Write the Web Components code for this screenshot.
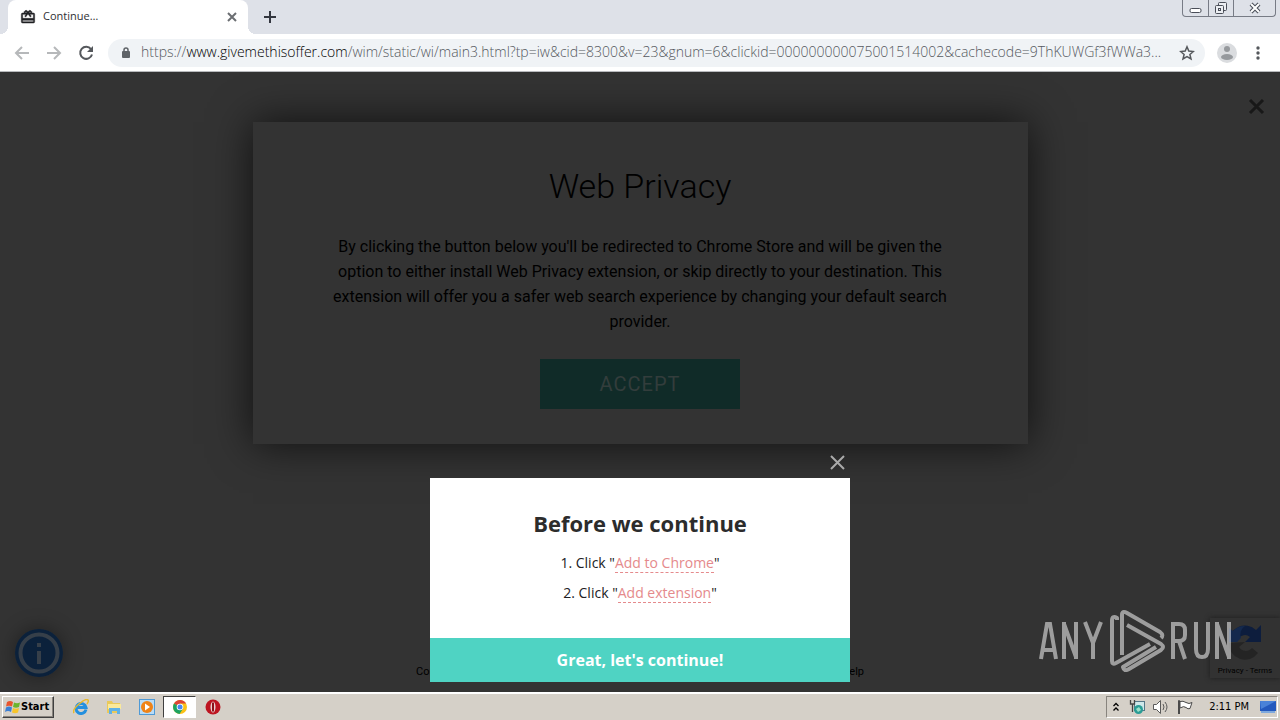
<!DOCTYPE html>
<html lang="en">
<head>
<meta charset="utf-8">
<title>Continue…</title>
<style>
html, body { height: 100%; margin: 0; }
body { display: flex; flex-direction: column; overflow: hidden; font-family: "Open Sans", sans-serif; background: #333; }
</style>
</head>
<body>
<tab-strip></tab-strip>
<address-bar></address-bar>
<offer-page>
  <offer-card heading="Web Privacy" action="ACCEPT">By clicking the button below you'll be redirected to Chrome Store and will be given the option to either install Web Privacy extension, or skip directly to your destination. This extension will offer you a safer web search experience by changing your default search provider.</offer-card>
  <info-badge slot="overlay"></info-badge>
  <captcha-badge slot="overlay"></captcha-badge>
  <run-watermark slot="overlay"></run-watermark>
  <steps-dialog slot="overlay"></steps-dialog>
</offer-page>
<task-bar></task-bar>

<script>
const define = (name, html) => {
  const template = document.createElement('template');
  template.innerHTML = '<style>*{box-sizing:border-box}button{font:inherit;border:0;padding:0;margin:0;background:none;color:inherit}svg{display:block;flex:none}</style>' + html;
  customElements.define(name, class extends HTMLElement {
    connectedCallback() {
      if (this.shadowRoot) return;
      const root = this.attachShadow({ mode: 'open' });
      root.append(template.content.cloneNode(true));
      root.querySelectorAll('[data-from]').forEach(el => { el.textContent = this.getAttribute(el.dataset.from); });
    }
  });
};

define('tab-strip', `
<style>
:host { display: flex; flex: none; height: 34px; background: #dee1e8; padding-left: 8px; align-items: stretch; font-size: 11px; color: #303134; }
.tab { position: relative; width: 240px; background: #fff; border-radius: 8px 8px 0 0; display: flex; align-items: center; padding: 0 10px 0 12px; gap: 7px; }
.tab::before, .tab::after { content: ""; position: absolute; bottom: 0; width: 8px; height: 8px; }
.tab::before { left: -8px; background: radial-gradient(circle at 0 0, transparent 8px, #fff 8px); }
.tab::after { right: -8px; background: radial-gradient(circle at 100% 0, transparent 8px, #fff 8px); }
.title { flex: 1; line-height: 16px; padding-bottom: 2px; }
.new { margin-left: 15px; }
.window { margin-left: auto; margin-right: 4px; height: 17px; display: flex; border: 1px solid #777b85; border-top: 0; border-radius: 0 0 4px 4px; }
.window button { display: flex; justify-content: center; padding-top: 1px; width: 25px; }
.window button + button { border-left: 1px solid #777b85; }
.window button:last-child { width: 42px; }
</style>
<div class="tab">
  <svg width="16" height="16" viewBox="0 0 24 24" fill="#202124"><path d="M20 6h-2.200a3 3 0 0 0-5-3L12 4l-.8-1a3 3 0 0 0-5 3H4a2 2 0 0 0-2 2v11a2 2 0 0 0 2 2h16a2 2 0 0 0 2-2V8a2 2 0 0 0-2-2zm-5-2a1 1 0 1 1 0 2 1 1 0 0 1 0-2zM9 4a1 1 0 1 1 0 2 1 1 0 0 1 0-2zm11 15H4v-2h16v2zm0-5H4V8h5.100L7 10.800 8.600 12 12 7.400l3.400 4.600L17 10.800 14.900 8H20v6z" stroke="#202124" stroke-width=".7"/></svg>
  <span class="title">Continue…</span>
  <button aria-label="Close tab"><svg width="12" height="12" viewBox="0 0 12 12" stroke="#6b6e72" stroke-width="2"><path d="M2 2l8 8M10 2l-8 8"/></svg></button>
</div>
<button class="new" aria-label="New tab"><svg width="14" height="14" viewBox="0 0 14 14" stroke="#33363f" stroke-width="2"><path d="M7 1v12M1 7h12"/></svg></button>
<div class="window">
  <button aria-label="Minimize"><svg width="13" height="14" viewBox="0 0 13 14" fill="#fff" stroke="#4a4e58"><rect x="1" y="7.500" width="11" height="4" rx="1.500"/></svg></button>
  <button aria-label="Restore"><svg width="14" height="14" viewBox="0 0 14 14" fill="#eceef2" stroke="#4a4e58"><rect x="4.500" y="1.500" width="8" height="8" rx="1"/><rect x="1.500" y="4.500" width="8" height="8" rx="1"/><rect x="4.500" y="7.500" width="2" height="2"/></svg></button>
  <button aria-label="Close window"><svg width="14" height="14" viewBox="0 0 14 14"><path d="M3 3l8 8M11 3l-8 8" stroke="#4a4e58" stroke-width="4"/><path d="M3 3l8 8M11 3l-8 8" stroke="#fff" stroke-width="2"/></svg></button>
</div>`);

define('address-bar', `
<style>
:host { display: flex; flex: none; box-sizing: border-box; height: 38px; align-items: center; background: #fff; border-bottom: 1px solid #b8babd; padding: 0 15px 0 14px; }
.nav { display: flex; gap: 16px; margin-right: 14px; }
.box { flex: 1; min-width: 0; height: 28px; border-radius: 14px; background: #f0f3f6; display: flex; align-items: center; padding: 0 10px 0 12px; gap: 9px; }
.url { flex: 1; min-width: 0; font-size: 14px; line-height: 18px; padding-bottom: 2px; font-weight: 300; white-space: nowrap; color: #55595e; }
.url b { font-weight: 300; color: #000; }
.face { margin: 0 14px 0 12px; }
</style>
<div class="nav">
  <button aria-label="Back"><svg width="16" height="16" viewBox="0 0 16 16" fill="none" stroke="#b6b8ba" stroke-width="2"><path d="M15 8H2M8 2L2 8l6 6"/></svg></button>
  <button aria-label="Forward"><svg width="16" height="16" viewBox="0 0 16 16" fill="none" stroke="#b6b8ba" stroke-width="2"><path d="M1 8h13M8 2l6 6-6 6"/></svg></button>
  <button aria-label="Reload"><svg width="16" height="16" viewBox="0 0 16 16"><path d="M13 4.200A6 6 0 1 0 14 9.500" fill="none" stroke="#55585c" stroke-width="2"/><path d="M15 1v6H9z" fill="#55585c"/></svg></button>
</div>
<div class="box">
  <svg width="12" height="14" viewBox="0 0 12 14"><rect x="2" y="5" width="8" height="7" rx="1" fill="#5f6368"/><path d="M4 6V4a2 2 0 0 1 4 0v2" fill="none" stroke="#5f6368" stroke-width="1.500"/></svg>
  <span class="url">https://<b>www.givemethisoffer.com</b>/wim/static/wi/main3.html?tp=iw&amp;cid=8300&amp;v=23&amp;gnum=6&amp;clickid=000000000075001514002&amp;cachecode=9ThKUWGf3fWWa3...</span>
  <button aria-label="Bookmark this page"><svg width="16" height="16" viewBox="0 0 16 16" fill="none" stroke="#55585c" stroke-width="1.500"><path d="M8 1.800l1.800 4.300 4.600.4-3.500 3 1.100 4.500L8 11.600 4 14l1.100-4.500-3.500-3 4.600-.4z"/></svg></button>
</div>
<button class="face" aria-label="Profile"><svg width="20" height="20" viewBox="0 0 20 20"><circle cx="10" cy="10" r="10" fill="#dadcdf"/><circle cx="10" cy="6" r="3" fill="#96999d"/><ellipse cx="10" cy="14" rx="6" ry="3" fill="#96999d"/></svg></button>
<button aria-label="Menu"><svg width="14" height="16" viewBox="0 0 14 16" fill="#55585c"><circle cx="7" cy="3" r="1.700"/><circle cx="7" cy="8" r="1.700"/><circle cx="7" cy="13" r="1.700"/></svg></button>`);

define('offer-page', `
<style>
:host { position: relative; display: flex; flex-direction: column; align-items: center; flex: 1; min-height: 0; padding-top: 50px; background: #333; overflow: hidden; }
.close { position: absolute; top: 26px; right: 15px; }
footer { margin-top: auto; width: 448px; display: flex; justify-content: space-between; padding-bottom: 12px; font: 11px/16px Roboto, sans-serif; }
footer a { color: #000; text-decoration: none; }
</style>
<slot></slot>
<button class="close" aria-label="Close offer"><svg width="17" height="17" viewBox="0 0 17 17" stroke="#181818" stroke-width="3"><path d="M2 2l13 13M15 2L2 15"/></svg></button>
<footer><a href="#contact">Contact</a><a href="#help">Help</a></footer>
<slot name="overlay"></slot>`);

define('offer-card', `
<style>
:host { display: flex; flex-direction: column; align-items: center; box-sizing: border-box; width: 775px; max-width: 90%; padding: 40px 80px 35px; background: #333; box-shadow: 0 0 40px rgba(0,0,0,.7); font-family: Roboto, sans-serif; color: #000; text-align: center; }
h1 { margin: 0 0 24px; font-size: 34px; line-height: 48px; font-weight: 300; }
p { margin: 0 0 25px; font-size: 16px; line-height: 25px; }
button { width: 200px; height: 50px; background: #102b28; color: #333d3c; font-size: 20px; letter-spacing: 1px; }
</style>
<h1 data-from="heading"></h1>
<p><slot></slot></p>
<button data-from="action"></button>`);

define('info-badge', `
<style>
:host { position: absolute; left: 15px; bottom: 15px; border-radius: 50%; box-shadow: 0 0 20px rgba(0,0,0,.4); }
</style>
<svg width="48" height="48" viewBox="0 0 48 48" role="img" aria-label="Information"><circle cx="24" cy="24" r="24" fill="#0b213b"/><circle cx="24" cy="24" r="18.500" fill="#0b213b" stroke="#363f49" stroke-width="4"/><rect x="22" y="14" width="4" height="4" fill="#363f49"/><rect x="22" y="22" width="4" height="13" fill="#363f49"/></svg>`);

define('captcha-badge', `
<style>
:host { position: absolute; right: 0; bottom: 14px; width: 70px; height: 60px; display: flex; flex-direction: column; align-items: center; background: #323232; box-shadow: 0 0 5px #1c1c1c; padding-top: 4px; box-sizing: border-box; }
p { margin: 0; font: 8px/12px Roboto, sans-serif; color: #000; white-space: nowrap; }
a { color: inherit; text-decoration: none; }
</style>
<svg width="40" height="43" viewBox="0 0 40 43"><path d="M4 20A16 16 0 0 1 31 8l5-5v17H20l5-5a8 8 0 0 0-13 5z" fill="#0d1d3d"/><path d="M4 6v14h8l4-4A10 10 0 0 1 20 4 16 16 0 0 0 8 9z" fill="#14294d"/><path d="M4 21a16 16 0 0 0 29 10l-6-5a8 8 0 0 1-13-1l6-5z" fill="#242424"/></svg>
<p><a href="#privacy">Privacy</a> - <a href="#terms">Terms</a></p>`);

define('run-watermark', `
<style>
:host { position: absolute; right: 48px; bottom: 20px; display: flex; align-items: center; opacity: .52; }
</style>
<svg width="194" height="64" viewBox="0 0 194 64" fill="none" stroke="#fff" stroke-width="4" role="img" aria-label="ANY RUN">
<path d="M3 51L9 16h3l6 35M6 42h9M26 51V14M26 16l12 33M38 51V14M47 14l8 21 8-21M55 33v18"/>
<path d="M79 12V10q-5-3-5 3v40q0 4 4 2L112 36M84 47V7q0-5 5-2l33 19q4 3 1 6M89 17l34 19q4 3 0 6L91 61q-5 3-6-2l33-20" stroke-linejoin="round"/>
<path d="M135 51V16h6q6 0 6 6v5q0 6-6 6h-6M141 33l6 18M158 14v27q0 8 6 8t6-8V14M179 51V14M179 16l12 33M191 51V14"/>
</svg>`);

define('steps-dialog', `
<style>
:host { position: absolute; left: 50%; bottom: 10px; transform: translateX(-50%); width: 420px; background: #fff; color: #202124; text-align: center; }
.close { position: absolute; right: 4px; top: -24px; }
.body { padding: 30px 0; }
h2 { margin: 0 0 10px; font-size: 22px; line-height: 30px; font-weight: 700; color: #2c2c2c; }
ol { margin: 0; padding: 0; list-style: none; font-size: 14px; line-height: 30px; }
li a { color: #e58a8c; text-decoration: none; border-bottom: 1px dashed #e58a8c; }
.go { display: block; width: 100%; height: 44px; background: #4fd3c3; color: #fff; font-size: 16px; font-weight: 700; }
</style>
<button class="close" aria-label="Close dialog"><svg width="17" height="17" viewBox="0 0 17 17" stroke="#aaa" stroke-width="2"><path d="M2 2l13 13M15 2L2 15"/></svg></button>
<div class="body">
  <h2>Before we continue</h2>
  <ol><li>1. Click "<a href="#add">Add to Chrome</a>"</li><li>2. Click "<a href="#extension">Add extension</a>"</li></ol>
</div>
<button class="go">Great, let's continue!</button>`);

define('task-bar', `
<style>
:host { display: flex; flex: none; align-items: center; height: 28px; box-sizing: border-box; background: #d5d0c8; border-top: 2px solid #fff; padding: 0 2px; font: 11px/16px "DejaVu Sans Condensed", "DejaVu Sans", sans-serif; color: #000; }
.start { display: flex; align-items: center; width: 52px; height: 22px; padding-left: 2px; font-weight: 700; background: #d5d0c8; border: 1px solid; border-color: #fff #404040 #404040 #fff; box-shadow: inset -1px -1px #88847e; }
.apps { display: flex; align-items: center; margin-left: 10px; }
.apps button { width: 33px; height: 22px; display: flex; align-items: center; justify-content: center; }
.apps .active { background: #fff; border: 1px solid; border-color: #404040 #fff #fff #404040; }
.tray { margin-left: auto; display: flex; align-items: center; gap: 8px; height: 22px; padding: 0 1px 0 6px; border: 1px solid; border-color: #88847e #fff #fff #88847e; }
.more { margin-right: 2px; }
time { margin: 0 3px 0 8px; }
</style>
<button class="start"><svg width="16" height="16" viewBox="0 0 16 16"><path d="M2 3q3-2 6 0L7 7.500q-3-1.500-6 0z" fill="#e8552d"/><path d="M9 3.500q3 1.500 6 0L14 8q-3 1.500-6 0z" fill="#6cb52d"/><path d="M1 8.500q3-2 6 0L6 13q-3-2-6 0z" fill="#3b7fd4"/><path d="M8 9q3 1.500 6 0l-1 4.500q-3 1.500-6 0z" fill="#f7c52b"/></svg>Start</button>
<div class="apps">
  <button aria-label="Internet Explorer"><svg width="16" height="16" viewBox="0 0 16 16" fill="none"><path d="M13 10.500A5 5 0 1 1 13 8.500H4" stroke="#2590de" stroke-width="3"/><path d="M1 14Q-1 11 6 5t9-4q1 1-1 4" stroke="#e8b92c" stroke-width="1.500"/></svg></button>
  <button aria-label="Explorer"><svg width="16" height="16" viewBox="0 0 16 16"><path d="M1 2h5l1 2h7v10H1z" fill="#e9c95a"/><path d="M2 5h13v5H2z" fill="#fae99a"/><path d="M3 15V9h11v6h-3v-3H6v3z" fill="#5fb1e6"/></svg></button>
  <button aria-label="Media Player"><svg width="16" height="16" viewBox="0 0 16 16"><rect x=".5" y=".5" width="15" height="15" fill="#b9dcf7" stroke="#4f9ad6"/><circle cx="8" cy="8" r="6" fill="#ef8318"/><path d="M6 4.500l5 3.500-5 3.500z" fill="#fff"/></svg></button>
  <button class="active" aria-label="Chrome"><svg width="14" height="14" viewBox="0 0 14 14"><circle cx="7" cy="7" r="7" fill="#fbc116"/><path d="M7 7L1 3.500A7 7 0 0 1 13.100 3.500H7z" fill="#dd4437"/><path d="M7 7L1 3.500A7 7 0 0 0 6.500 14L10 8.700z" fill="#1da362"/><circle cx="7" cy="7" r="3.300" fill="#fff"/><circle cx="7" cy="7" r="2.500" fill="#4688f1"/></svg></button>
  <button aria-label="Opera"><svg width="16" height="16" viewBox="0 0 16 16"><circle cx="8" cy="8" r="7.500" fill="#bd1521"/><ellipse cx="8" cy="8" rx="2.500" ry="5.500" fill="#e9d3d1"/><path d="M8 3.500v9" stroke="#8d1018" stroke-width="2"/></svg></button>
</div>
<div class="tray">
  <svg class="more" width="6" height="10" viewBox="0 0 6 10" fill="none" stroke="#000" stroke-width="1.300"><path d="M.5 4L3 1.500 5.500 4M.5 8.500L3 6l2.500 2.500"/></svg>
  <svg width="16" height="16" viewBox="0 0 16 16"><rect x="5.500" y="2.500" width="10" height="9" fill="#cfe8ea" stroke="#557788"/><circle cx="9.500" cy="10.500" r="4.500" fill="#2a9c95"/><path d="M7 10l3-2 2 3-3 2z" fill="#9de0c9"/><path d="M1.500 1v4h4V1M3.500 5v8" fill="none" stroke="#444" stroke-width="1.300"/></svg>
  <svg width="16" height="16" viewBox="0 0 16 16" fill="#fff" stroke="#5a5a5a"><path d="M.5 5.500h3l4-4v13l-4-4h-3z"/><path d="M10 5q2 3 0 6M12 3q4 5 0 10" fill="none"/></svg>
  <svg width="16" height="16" viewBox="0 0 16 16" fill="#fff" stroke="#4a4a4a"><path d="M1.500 15V1.500h1V15M3 2.500q3-1 6 1t6 0l-2 6q-2 1-4-1T3 9z"/></svg>
  <time>2:11 PM</time>
  <svg width="16" height="14" viewBox="0 0 16 14"><path d="M0 1h16v10H0z" fill="#2459bd"/><path d="M0 1h16L1 9z" fill="#4a82d8"/><path d="M1 11h14v2H1z" fill="#7fa9dd"/></svg>
</div>`);
</script>
</body>
</html>
